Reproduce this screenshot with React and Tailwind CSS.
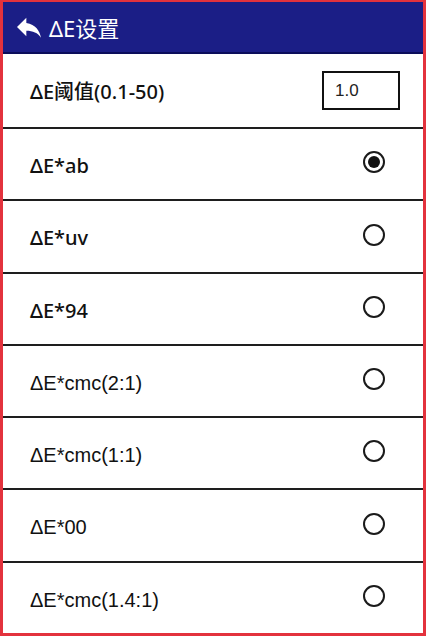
export default function App() {
  const items = [
    { label: "ΔE*ab", bold: true, checked: true, h: "h-[72px]" },
    { label: "ΔE*uv", bold: true, h: "h-[73px]" },
    { label: "ΔE*94", bold: true, h: "h-[72px]" },
    { label: "ΔE*cmc(2:1)", h: "h-[72px]" },
    { label: "ΔE*cmc(1:1)", h: "h-[72px]" },
    { label: "ΔE*00", h: "h-[73px]" },
    { label: "ΔE*cmc(1.4:1)", last: true },
  ];
  return (
    <div className="w-[426px] h-[636px] bg-white border-[#e3323d] border-l-[3px] border-t-[2px] border-r-[3px] border-b-[3px] flex flex-col overflow-hidden font-['Liberation_Sans','Noto_Sans_CJK_SC',sans-serif]">
      <div className="h-[52px] shrink-0 bg-[#1b1e86] border-b-2 border-[#0b0d5a] flex items-center pl-[10px] text-white">
        <svg width="32" height="32" viewBox="0 0 24 24" fill="white">
          <path d="M10 9V5l-7 7 7 7v-4.1c5 0 8.5 1.6 11 5.1-1-5-4-10-11-11z" />
        </svg>
        <span className="ml-[4px] mt-[2px] text-[22px] font-['Noto_Sans','Noto_Sans_CJK_SC',sans-serif] leading-none">ΔE设置</span>
      </div>
      <div className="h-[75px] shrink-0 border-b-2 border-[#1e1e1e] flex items-center justify-between pl-[27px] pr-[23px]">
        <span className="mt-[2px] text-[20px] font-medium text-[#111] font-['Noto_Sans','Noto_Sans_CJK_SC',sans-serif]">ΔE阈值(0.1-50)</span>
        <div className="w-[78px] h-[39px] border-2 border-[#111] flex items-center pl-[11px] text-[17px] text-[#222]">1.0</div>
      </div>
      {items.map((it) => (
        <div
          key={it.label}
          className={
            it.last
              ? "flex-1 flex items-center justify-between pl-[27px] pr-[38px]"
              : `${it.h} shrink-0 border-b-2 border-[#1e1e1e] flex items-center justify-between pl-[27px] pr-[38px]`
          }
        >
          <span
            className={
              it.bold
                ? "mt-[3px] text-[20px] font-medium text-[#111] font-['Noto_Sans','Noto_Sans_CJK_SC',sans-serif]"
                : "mt-[3px] text-[20px] text-[#111]"
            }
          >
            {it.label}
          </span>
          <div className="w-[22px] h-[22px] mb-[4px] rounded-full border-2 border-[#1a1a1a] flex items-center justify-center">
            {it.checked && <div className="w-[12px] h-[12px] rounded-full bg-[#111]" />}
          </div>
        </div>
      ))}
    </div>
  );
}
